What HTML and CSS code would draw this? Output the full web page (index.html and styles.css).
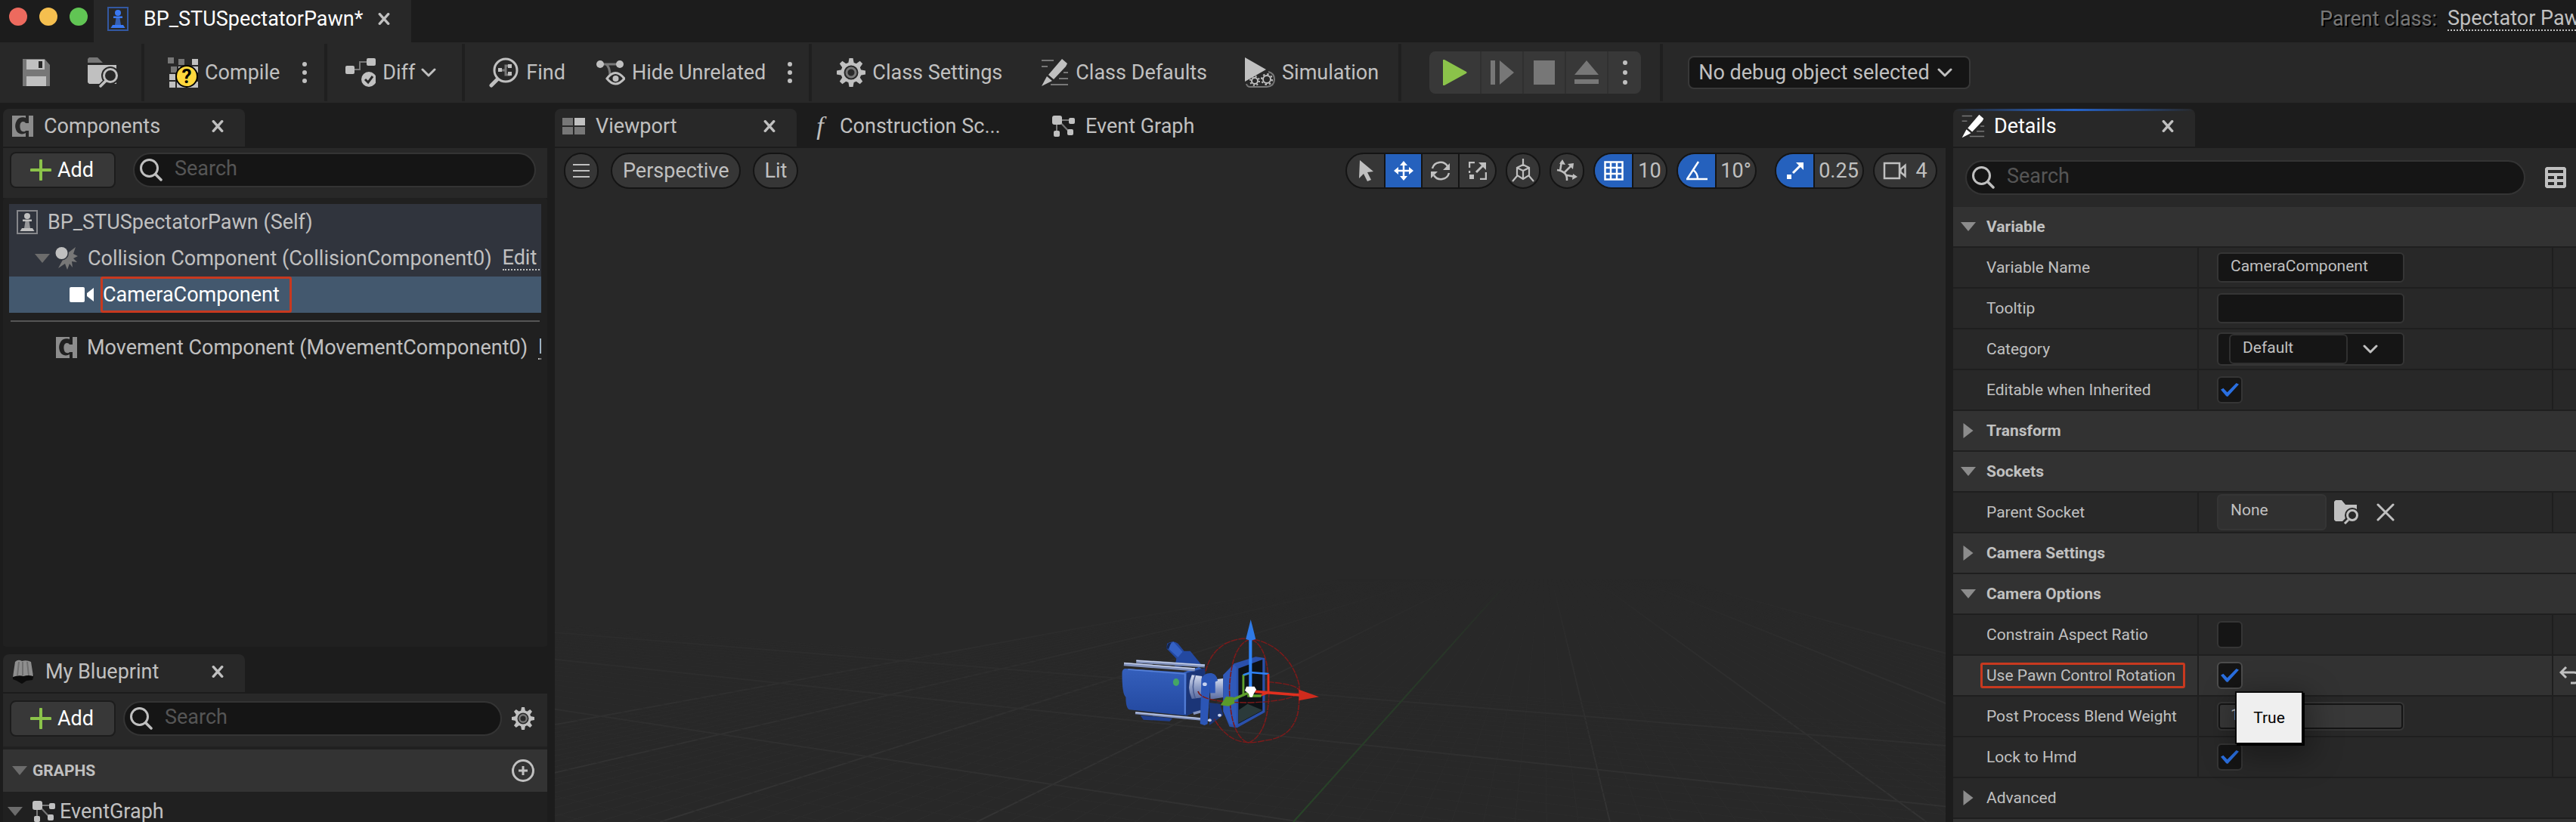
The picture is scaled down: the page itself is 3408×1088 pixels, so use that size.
FILE: index.html
```html
<!DOCTYPE html>
<html lang="en">
<head>
<meta charset="utf-8">
<title>BP_STUSpectatorPawn</title>
<link rel="stylesheet" href="styles.css">
</head>
<body>
<svg class="defs" width="0" height="0" aria-hidden="true">
  <defs>
    <symbol id="pawn" viewBox="0 0 28 32">
      <path d="M1 1h26v30H1z" fill="none" stroke="currentColor" stroke-width="2" opacity=".6"/>
      <circle cx="14" cy="8" r="4"/><path d="M8 12.500h12v2.500H8z"/>
      <path d="M11.500 15h5l1.500 9h-8z" opacity=".7"/><path d="M7 24h14l2.500 4h-19z"/>
    </symbol>
    <symbol id="close" viewBox="0 0 14 14"><path d="M2 1.500l10 11M12 1.500l-10 11" stroke="currentColor" stroke-width="3" stroke-linecap="round"/></symbol>
    <symbol id="component" viewBox="0 0 28 28">
      <path d="M0 0h18v3c-2-1-9-2-12 4-3 5-2 11 1 15 3 3 8 3 11 1v5H0z"/>
      <path d="M22 0h6v28h-6v-8h-4c-1 2-6 2-7-2-1-3-1-7 1-9 2-2 5-1 6 1h4z"/>
    </symbol>
    <symbol id="graph" viewBox="0 0 30 28">
      <path d="M6 6h18M6 6v18M8 6l16 17" stroke="#777" stroke-width="2" fill="none"/>
      <rect width="13" height="12" rx="3"/><rect x="22" y="3" width="8" height="8" rx="2"/><rect x="2" y="20" width="8" height="8" rx="2"/><rect x="20" y="18" width="8" height="8" rx="2"/>
    </symbol>
    <symbol id="lens" viewBox="0 0 30 30"><circle cx="12.500" cy="12.500" r="11" fill="none" stroke="currentColor" stroke-width="3"/><path d="M20.500 20.500l7.500 7.500" stroke="currentColor" stroke-width="3.500" stroke-linecap="round"/></symbol>
    <symbol id="plus" viewBox="0 0 28 28"><path d="M14 1.500v25M1.500 14h25" stroke="#8bc34a" stroke-width="4" stroke-linecap="round"/></symbol>
    <symbol id="gear" viewBox="0 0 38 38">
      <g id="teeth"><path d="M16.500 0h5l1.500 8h-8zM16.500 38h5l1.500-8h-8z"/><path d="M0 16.500v5l8 1.500v-8zM38 16.500v5l-8 1.500v-8z"/></g>
      <use href="#teeth" transform="rotate(45 19 19)"/>
      <circle cx="19" cy="19" r="11.500" fill="none" stroke="currentColor" stroke-width="4"/>
      <circle cx="19" cy="19" r="6" fill="none" stroke="#777" stroke-width="3"/>
    </symbol>
    <symbol id="pencil" viewBox="0 0 38 38">
      <path d="M2 3h16M2 11h8M31 19h6M25 27h12M14 35h23" stroke="#777" stroke-width="2"/>
      <path d="M29 1l7 6-2 4-16 17-7-6zM9 24l7 6-14 7z"/>
    </symbol>
    <symbol id="down" viewBox="0 0 20 12"><path d="M2 2l8 8 8-8" fill="none" stroke="currentColor" stroke-width="3" stroke-linecap="round" stroke-linejoin="round"/></symbol>
    <symbol id="dots" viewBox="0 0 6 28"><circle cx="3" cy="3" r="3"/><circle cx="3" cy="14" r="3"/><circle cx="3" cy="25" r="3"/></symbol>
    <symbol id="open" viewBox="0 0 20 12"><path d="M0 0h20l-10 12z"/></symbol>
    <symbol id="shut" viewBox="0 0 13 20"><path d="M0 0l13 10-13 10z"/></symbol>
  </defs>
</svg>

<header class="titlebar">
  <div class="lights"><i class="red"></i><i class="amber"></i><i class="green"></i></div>
  <div class="doc-tab">
    <svg class="blue" width="28" height="32"><use href="#pawn"/></svg>
    <span>BP_STUSpectatorPawn*</span>
    <button class="icon" aria-label="Close"><svg width="14" height="14"><use href="#close"/></svg></button>
  </div>
  <div class="parent"><span class="parent-label">Parent class:</span><a class="dotted" href="#">Spectator Pawn</a></div>
</header>

<nav class="toolbar">
  <div class="group files">
    <button class="tool" aria-label="Save"><svg width="36" height="36" viewBox="0 0 36 36"><path d="M0 0h29l7 8v28H0z" fill="#777"/><path d="M5 1h24v13H5zM5 23h26v13H5z"/><path d="M21 3h5v9h-5z" fill="#282828"/></svg></button>
    <button class="tool" aria-label="Browse"><svg width="40" height="40" viewBox="0 0 40 40"><path d="M0 7V2l2-2h11l7 7z" fill="#777"/><path d="M0 10h38v25H2l-2-2z"/><circle cx="30" cy="24" r="12" fill="#282828"/><path d="M24 32l-9 9" stroke="#282828" stroke-width="8"/><circle cx="30" cy="24" r="8.500" fill="#282828" stroke="currentColor" stroke-width="3"/><path d="M24 31l-7 7" stroke="currentColor" stroke-width="3.500" stroke-linecap="round"/></svg></button>
  </div>
  <div class="group compile">
    <button class="tool"><svg width="40" height="40" viewBox="0 0 40 40"><path d="M0 0h8v8H0zM14 2h8v8h-8zM4 12h8v8H4z" fill="#777"/><path d="M32 2h8v8h-8zM14 12h8v8h-8zM32 12h8v8h-8zM2 22h8v8H2zM2 32h8v8H2zM12 32h28v8H12z"/><circle cx="25" cy="25" r="14" fill="#ffd83d" stroke="#000" stroke-width="2"/><text x="25" y="34" text-anchor="middle" class="query">?</text></svg>Compile</button>
    <button class="tool" aria-label="Compile options"><svg width="6" height="28"><use href="#dots"/></svg></button>
  </div>
  <div class="group diff">
    <button class="tool"><svg width="40" height="38" viewBox="0 0 40 38"><path d="M11 15h8V5h10" fill="none" stroke="#777" stroke-width="2"/><rect y="10" width="12" height="11" rx="2"/><rect x="28" width="12" height="10" rx="2"/><circle cx="31" cy="28" r="10"/><path d="M26 28l4 4 6-8" fill="none" stroke="#282828" stroke-width="3"/></svg>Diff<svg class="tight" width="20" height="12"><use href="#down"/></svg></button>
  </div>
  <div class="group find">
    <button class="tool"><svg width="40" height="40" viewBox="0 0 40 40"><circle cx="22" cy="17" r="15" fill="none" stroke="currentColor" stroke-width="3"/><path d="M11 29l-8 8" stroke="currentColor" stroke-width="5" stroke-linecap="round"/><path d="M16 17h5M28 11h-6v12h6" fill="none" stroke="#777" stroke-width="3"/><path d="M12 14h5v5h-5zM25 9h5v5h-5zM25 19h5v5h-5z"/></svg>Find</button>
    <button class="tool"><svg width="38" height="36" viewBox="0 0 38 36"><path d="M5 7h26M13 7q5 4 5 15" fill="none" stroke="#777" stroke-width="3"/><circle cx="5" cy="7" r="5"/><circle cx="31" cy="7" r="5"/><path d="M14 26q11-15 23 0q-12 14-23 0z" fill="#282828" stroke="currentColor" stroke-width="3"/><circle cx="25.500" cy="26" r="4"/></svg>Hide Unrelated</button>
    <button class="tool" aria-label="Hide options"><svg width="6" height="28"><use href="#dots"/></svg></button>
  </div>
  <div class="group classes">
    <button class="tool"><svg width="38" height="38"><use href="#gear"/></svg>Class Settings</button>
    <button class="tool"><svg width="38" height="38"><use href="#pencil"/></svg>Class Defaults</button>
    <button class="tool"><svg width="40" height="40" viewBox="0 0 40 40"><path d="M0 0l28 16L0 32z"/><path d="M3 39q-3-3 0-6l15-8 14-7q7 1 7 9 0 12-9 12z" fill="#282828"/><path d="M2 35q1 4 5 4h22q10-1 10-10 0-8-8-10" fill="none" stroke="#777" stroke-width="2"/><g fill="none" stroke="currentColor"><circle cx="13" cy="31" r="4" stroke-width="2"/><circle cx="13" cy="31" r="6" stroke-width="2" stroke-dasharray="2 2.700"/><circle cx="29" cy="29" r="5" stroke-width="2"/><circle cx="29" cy="29" r="7" stroke-width="2" stroke-dasharray="2.500 3"/></g></svg>Simulation</button>
  </div>
  <div class="group play-wrap">
    <div class="play">
      <button class="wide" aria-label="Play"><svg width="32" height="34" viewBox="0 0 32 34"><path d="M0 1q0-2 2-1l29 16q1 1 0 2L2 34q-2 1-2-1z" fill="#8bc34a"/></svg></button>
      <button aria-label="Step"><svg width="31" height="32" viewBox="0 0 31 32"><path d="M0 0h6v32H0zM12 0l19 16-19 16z" fill="#777"/></svg></button>
      <button aria-label="Stop"><svg width="28" height="32" viewBox="0 0 28 32"><path d="M0 0h28v32H0z" fill="#777"/></svg></button>
      <button aria-label="Eject"><svg width="32" height="32" viewBox="0 0 32 32"><path d="M16 0l16 19H0zM0 25h32v6H0z" fill="#777"/></svg></button>
      <button class="last" aria-label="Play options"><svg width="6" height="34" viewBox="0 0 6 34"><circle cx="3" cy="4" r="3"/><circle cx="3" cy="17" r="3"/><circle cx="3" cy="30" r="3"/></svg></button>
    </div>
  </div>
  <div class="group debug">
    <label class="picker"><select aria-label="Debug object"><option>No debug object selected</option></select><svg width="20" height="12"><use href="#down"/></svg></label>
  </div>
</nav>

<main class="workspace">
  <div class="left">
    <section class="panel">
      <div class="tabs">
        <div class="tab active"><svg class="grey" width="28" height="28"><use href="#component"/></svg><h2>Components</h2><button class="icon" aria-label="Close"><svg width="14" height="14"><use href="#close"/></svg></button></div>
      </div>
      <div class="bar">
        <button class="add"><svg width="28" height="28"><use href="#plus"/></svg>Add</button>
        <label class="search wide-gap"><svg width="30" height="30"><use href="#lens"/></svg><input type="text" placeholder="Search" aria-label="Search components"></label>
      </div>
      <ul class="tree">
        <li class="node lit"><svg width="28" height="32"><use href="#pawn"/></svg><span class="node-name">BP_STUSpectatorPawn (Self)</span></li>
        <li class="node lit child"><svg class="arrow" width="20" height="12"><use href="#open"/></svg><svg class="burst" width="30" height="30" viewBox="0 0 30 30"><path d="M14 10L27 0l-3 9 6 3-6 3 5 5-7-1 1 8-4-5-3 8-3-8-9 6 6-11z" fill="#777"/><circle cx="8.500" cy="8" r="9.500" fill="#30343d"/><circle cx="8.500" cy="8" r="8"/></svg><span class="node-name">Collision Component (CollisionComponent0)</span><a class="dotted" href="#">Edit in C++</a></li>
        <li class="node selected grandchild"><svg width="32" height="20" viewBox="0 0 32 20"><rect width="20" height="20" rx="2"/><path d="M32 1v18l-9-7V8z"/></svg><span class="marked">CameraComponent</span></li>
        <li class="rule"></li>
        <li class="node sibling"><svg class="grey" width="28" height="28"><use href="#component"/></svg><span class="node-name">Movement Component (MovementComponent0)</span><a class="dotted" href="#">Edit in C++</a></li>
      </ul>
    </section>
    <section class="panel">
      <div class="tabs">
        <div class="tab active"><svg width="30" height="32" viewBox="0 0 30 32"><path d="M1 20h28l-2 7-8 1-6 4-7-4-5-2z" fill="#0c0c0c"/><path d="M4 3q4-4 9-1 6-2 12 1l3 19q-7-2-13 0-6-2-14 1z" fill="#8e8e8e"/><path d="M9 3l-2 18M14 3v18M20 3l2 18" stroke="#6f6f6f" stroke-width="2"/></svg><h2>My Blueprint</h2><button class="icon" aria-label="Close"><svg width="14" height="14"><use href="#close"/></svg></button></div>
      </div>
      <div class="bar lower">
        <button class="add"><svg width="28" height="28"><use href="#plus"/></svg>Add</button>
        <label class="search"><svg width="30" height="30"><use href="#lens"/></svg><input type="text" placeholder="Search" aria-label="Search blueprint"></label>
        <button class="icon" aria-label="Settings"><svg width="30" height="30"><use href="#gear"/></svg></button>
      </div>
      <div class="graphs-head"><svg class="arrow" width="20" height="12"><use href="#open"/></svg><h3>GRAPHS</h3><button class="icon" aria-label="Add graph"><svg width="30" height="30" viewBox="0 0 30 30"><circle cx="15" cy="15" r="13.500" fill="none" stroke="currentColor" stroke-width="3"/><path d="M15 9v12M9 15h12" stroke="currentColor" stroke-width="3"/></svg></button></div>
      <div class="graph-row"><svg class="arrow" width="20" height="12"><use href="#open"/></svg><svg width="30" height="28"><use href="#graph"/></svg><span>EventGraph</span></div>
    </section>
  </div>

  <section class="panel center">
    <div class="tabs">
      <div class="tab active"><svg width="30" height="22" viewBox="0 0 30 22"><path d="M0 0h14v10H0zM0 12h14v10H0zM16 12h14v10H16z" fill="#777"/><path d="M16 0h14v10H16z"/></svg><h2>Viewport</h2><button class="icon" aria-label="Close"><svg width="14" height="14"><use href="#close"/></svg></button></div>
      <div class="tab idle"><i class="fn">f</i><h2>Construction Sc...</h2></div>
      <div class="tab"><svg width="30" height="28"><use href="#graph"/></svg><h2>Event Graph</h2></div>
    </div>
    <div class="view">
      <svg class="scene" viewBox="0 0 1840 892" preserveAspectRatio="xMidYMid slice" role="img" aria-label="Camera component in the viewport">
        <defs>
          <linearGradient id="fade" x1="0" y1="200" x2="0" y2="1164" gradientUnits="userSpaceOnUse"><stop offset="0" stop-color="#000"/><stop offset=".3" stop-color="#777"/><stop offset="1" stop-color="#fff"/></linearGradient>
          <mask id="far" maskUnits="userSpaceOnUse" x="0" y="0" width="1568" height="1164"><rect width="1568" height="1164" fill="url(#fade)"/></mask>
          <linearGradient id="body" x1="0" y1="0" x2="0" y2="1"><stop offset="0" stop-color="#3560bd"/><stop offset="1" stop-color="#23489f"/></linearGradient>
          <linearGradient id="metal" x1="0" y1="0" x2="0" y2="1"><stop offset="0" stop-color="#d5dcef"/><stop offset=".5" stop-color="#8e9dc6"/><stop offset="1" stop-color="#5a6ca0"/></linearGradient>
        </defs>
        <g transform="translate(0 504) scale(1.18 .3333)" mask="url(#far)" id="grid"></g>
        <g transform="translate(706 564) scale(.4082 .3333)">
          <path d="M255 275q20-15 35 0l20 30 20 0 40 60H280l5-30-32-40z" fill="#2348a0"/>
          <path d="M255 290l20-22 30 40-15 22z" fill="#3461c4"/><path d="M252 295l6-20 10-4-8 26z" fill="#15264f"/>
          <path d="M168 560l10 18 85 6 10-12z" fill="#203f8e"/>
          <path d="M118 375l190 14 50-20 20 15-5 150-55 28-185-24q-12-5-12-50-12-10-12-95 0-15 9-18z" fill="url(#body)"/>
          <path d="M318 392l60-20-5 165-57 24z" fill="#1b3577"/>
          <path d="M128 378l185 18v160" fill="none" stroke="#5680d8" stroke-width="5"/>
          <path d="M155 346l222 18M115 357l230 22" stroke="#8191bb" stroke-width="13"/><path d="M155 343l222 18M115 353l230 22" stroke="#cbd5ee" stroke-width="4"/>
          <path d="M152 551l215 25M340 553l25-8" stroke="#8494c0" stroke-width="10"/><path d="M152 549l215 24" stroke="#cbd5ee" stroke-width="3"/>
          <ellipse cx="284" cy="429" rx="10" ry="15" fill="#44a665"/>
          <path d="M335 400l33 5v85l-33 5q-18-45 0-95z" fill="url(#metal)"/><path d="M346 402q-14 45 0 90" fill="none" stroke="#4a5c92" stroke-width="4"/>
          <path d="M395 420l42-6v75l-42 8z" fill="url(#metal)"/><path d="M393 422h18v50h-18z" fill="#2b54b5"/>
          <path d="M392 500v10l35 5 10 45-45 40z" fill="#1c3576"/><path d="M366 415q10-25 33-22 18 5 20 30l-24 12-9 160-10 5-14-6z" fill="#2c56b6"/>
          <circle cx="377" cy="437" r="7" fill="#c7d2f0"/><circle cx="393" cy="580" r="6" fill="#c7d2f0"/><circle cx="425" cy="560" r="6" fill="#c7d2f0"/>
          <path d="M437 400l35-45 70-27 30 5v215l-90 62-25-5-20-60z" fill="#2a50ab"/>
          <path d="M486 374l78-35v203l-78 52z" fill="#0d1216"/><path d="M486 540l30-25 48 25-78 52z" fill="#2b3a3a"/><path d="M437 400l35-40 8 10v230l-23-5-20-50z" fill="#3059b8"/>
          <g fill="none" stroke="#7d1a1a" stroke-width="4" stroke-dasharray="22 3">
            <path d="M380 385q15-75 65-110 75-45 155 15 65 55 83 150 3 60-5 115-20 95-105 105-80 25-125-25-25-25-40-60"/>
            <path d="M525 258q-60 20-68 190 0 190 60 222 65-30 68-200 0-190-60-212z"/>
            <path d="M580 428q100 8 105 38-20 38-160 44-160 0-170-45"/>
          </g>
          <path d="M502 484v-82l24-10" fill="none" stroke="#5ea02c" stroke-width="7"/><path d="M502 400l24-10 58 6" fill="none" stroke="#2f83f5" stroke-width="7"/><path d="M583 396v74l-25 12" fill="none" stroke="#e0301f" stroke-width="7"/>
          <path d="M525 450V250" stroke="#2f83f5" stroke-width="10"/><path d="M526 180l16 78-16 6-16-6z" fill="#2f7ae6"/>
          <path d="M540 466l145 14" stroke="#e0301f" stroke-width="11"/><path d="M682 458l65 29-65 15z" fill="#cf2b1d"/>
          <path d="M520 470l-60 32M515 483h45" stroke="#5ea02c" stroke-width="10"/><path d="M428 520l18-34 25 2 3 24-20 12z" fill="#5a9a2a"/>
          <path d="M512 446h26l6 12-8 16-5 14h-8l-4-14-12-12z" fill="#fff"/>
        </g>
      </svg>
      <div class="view-bar">
        <button class="pill round" aria-label="Viewport options"><svg width="22" height="20" viewBox="0 0 22 20"><path d="M0 2h22M0 10h22M0 18h22" stroke="currentColor" stroke-width="2"/></svg></button>
        <button class="pill label">Perspective</button>
        <button class="pill label">Lit</button>
        <div class="view-tools">
          <div class="pill seg">
            <button aria-label="Select"><svg width="20" height="28" viewBox="0 0 20 28"><path d="M2 0l18 15-8 1 5 10-5 2-5-10-6 6z"/></svg></button>
            <button class="on" aria-label="Move"><svg width="26" height="26" viewBox="0 0 26 26"><path d="M13 3v20M3 13h20" stroke="currentColor" stroke-width="2.500"/><path d="M13 0l5 6H8zM13 26l5-6H8zM0 13l6-5v10zM26 13l-6-5v10z"/></svg></button>
            <button aria-label="Rotate"><svg width="28" height="26" viewBox="0 0 28 26"><path d="M3 10A11 11 0 0 1 23 7M25 16A11 11 0 0 1 5 19" fill="none" stroke="currentColor" stroke-width="2.500"/><path d="M26 3v9h-9zM1 23v-9h9z"/></svg></button>
            <button aria-label="Scale"><svg width="24" height="24" viewBox="0 0 24 24"><path d="M1 8V1h7M1 12v3M15 23h8v-9" fill="none" stroke="currentColor" stroke-width="2.500"/><path d="M10 14L20 4" stroke="currentColor" stroke-width="3"/><path d="M13 1h10v10zM1 17h6v6H1z"/></svg></button>
          </div>
          <button class="pill round" aria-label="Coordinate space"><svg width="32" height="34" viewBox="0 0 32 34"><path d="M16 1v10M8 24l-6 7M24 24l6 7M8 13l8-4 8 4v10l-8 5-8-5zM8 13l8 4 8-4M16 17v11" fill="none" stroke="currentColor" stroke-width="2.200"/></svg></button>
          <button class="pill round" aria-label="Surface snapping"><svg width="28" height="30" viewBox="0 0 28 30"><path d="M1 14q14 2 13 14M7 3L5 15M11 17l9-9M14 21l11 2" fill="none" stroke="currentColor" stroke-width="2.500"/><path d="M8 0l4 7-8-1zM15 6l8-1-1 8zM22 19l6 4-7 4z"/></svg></button>
          <div class="pill seg"><button class="on" aria-label="Grid snap"><svg width="26" height="26" viewBox="0 0 26 26"><path d="M1.500 1.500h23v23h-23zM9 1.500v23M17 1.500v23M1.500 9h23M1.500 17h23" fill="none" stroke="currentColor" stroke-width="2.500"/></svg></button><button class="ten">10</button></div>
          <div class="pill seg"><button class="on" aria-label="Angle snap"><svg width="28" height="26" viewBox="0 0 28 26"><path d="M16 1L1 24h27M9 12q6 4 6 12" fill="none" stroke="currentColor" stroke-width="2.500"/></svg></button><button class="deg">10°</button></div>
          <div class="pill seg scale-snap"><button class="on" aria-label="Scale snap"><svg width="24" height="24" viewBox="0 0 24 24"><path d="M9 15L19 5" stroke="currentColor" stroke-width="3"/><path d="M13 1h10v10zM1 17h6v6H1z"/></svg></button><button class="quarter">0.25</button></div>
          <button class="pill speed"><svg width="32" height="24" viewBox="0 0 32 24"><path d="M2 2h20v20H2zM29.500 5v14l-6-5v-4z" fill="none" stroke="currentColor" stroke-width="2.500"/></svg>4</button>
        </div>
      </div>
    </div>
  </section>

  <section class="panel details">
    <div class="tabs">
      <div class="tab active focus"><svg width="32" height="32"><use href="#pencil"/></svg><h2>Details</h2><button class="icon" aria-label="Close"><svg width="14" height="14"><use href="#close"/></svg></button></div>
    </div>
    <div class="bar detail-bar">
      <label class="search"><svg width="30" height="30"><use href="#lens"/></svg><input type="text" placeholder="Search" aria-label="Search details"></label>
      <button class="icon" aria-label="Property matrix"><svg width="28" height="28" viewBox="0 0 28 28"><path fill-rule="evenodd" d="M2 0h24l2 2v24l-2 2H2l-2-2V2zM4 4v4h20V4zM4 12v4h8v-4zM16 12v4h8v-4zM4 20v4h8v-4zM16 20v4h8v-4z"/></svg></button>
    </div>
    <div class="props">
      <h3 class="cat"><svg class="arrow" width="20" height="12"><use href="#open"/></svg>Variable</h3>
      <div class="prop"><label for="vname">Variable Name</label><div class="value"><input class="field" id="vname" type="text" value="CameraComponent"></div><span class="reset"></span></div>
      <div class="prop"><label for="tip">Tooltip</label><div class="value"><input class="field" id="tip" type="text"></div><span class="reset"></span></div>
      <div class="prop"><label for="category">Category</label><div class="value"><div class="combo"><input id="category" type="text" value="Default"><button class="icon" aria-label="Choose category"><svg width="20" height="12"><use href="#down"/></svg></button></div></div><span class="reset"></span></div>
      <div class="prop"><label for="editable">Editable when Inherited</label><div class="value"><input class="check" id="editable" type="checkbox" checked></div><span class="reset"></span></div>
      <h3 class="cat"><svg class="arrow" width="13" height="20"><use href="#shut"/></svg>Transform</h3>
      <h3 class="cat"><svg class="arrow" width="20" height="12"><use href="#open"/></svg>Sockets</h3>
      <div class="prop"><label for="socket">Parent Socket</label><div class="value"><input class="field none" id="socket" type="text" value="None" readonly>
        <button class="icon" aria-label="Browse sockets"><svg width="32" height="32" viewBox="0 0 32 32"><path d="M0 2l2-2h8l5 6h15v22H2l-2-2z"/><circle cx="24" cy="20" r="10" fill="#282828"/><path d="M19 25l-8 8" stroke="#282828" stroke-width="7"/><circle cx="24" cy="20" r="6.500" fill="none" stroke="currentColor" stroke-width="3"/><path d="M19 26l-5 5" stroke="currentColor" stroke-width="3"/></svg></button>
        <button class="icon" aria-label="Clear socket"><svg width="24" height="24" viewBox="0 0 24 24"><path d="M2 2l20 20M22 2L2 22" stroke="currentColor" stroke-width="3" stroke-linecap="round"/></svg></button></div><span class="reset"></span></div>
      <h3 class="cat"><svg class="arrow" width="13" height="20"><use href="#shut"/></svg>Camera Settings</h3>
      <h3 class="cat"><svg class="arrow" width="20" height="12"><use href="#open"/></svg>Camera Options</h3>
      <div class="prop"><label for="aspect">Constrain Aspect Ratio</label><div class="value"><input class="check" id="aspect" type="checkbox"></div><span class="reset"></span></div>
      <div class="prop hover"><label for="rotation"><span class="marked">Use Pawn Control Rotation</span></label><div class="value"><input class="check" id="rotation" type="checkbox" checked><div class="tooltip" role="tooltip">True</div></div><span class="reset"><svg width="30" height="26" viewBox="0 0 30 26"><path d="M9 2L2 9l7 7M2 9h17q7 0 7 7t-7 7h-4" fill="none" stroke="currentColor" stroke-width="3"/></svg></span></div>
      <div class="prop"><label for="blend">Post Process Blend Weight</label><div class="value"><input class="field spin" id="blend" type="text" value="1.0"></div><span class="reset"></span></div>
      <div class="prop"><label for="hmd">Lock to Hmd</label><div class="value"><input class="check" id="hmd" type="checkbox" checked></div><span class="reset"></span></div>
      <div class="cat advanced"><svg class="arrow" width="13" height="20"><use href="#shut"/></svg>Advanced</div>
      <div class="cat"></div>
    </div>
  </section>
</main>
<script src="grid.js"></script>
</body>
</html>
```
FILE: styles.css
```css
* { box-sizing: border-box; }
body {
  margin: 0;
  height: 100vh;
  display: flex;
  flex-direction: column;
  overflow: hidden;
  background: #1c1c1c;
  color: #c0c0c0;
  font: 27px/32px Roboto, "Noto Sans", sans-serif;
  white-space: nowrap;
}
.defs { position: absolute; }
svg { fill: currentColor; flex: none; display: block; }
button, input, select { font: inherit; color: inherit; }
button { border: 0; padding: 0; background: none; display: flex; align-items: center; justify-content: center; }
h2, h3 { margin: 0; font: inherit; }
ul { margin: 0; padding: 0; list-style: none; }
a { color: inherit; text-decoration: none; }
.dotted { border-bottom: 2px dotted #c0c0c0; line-height: 30px; }

/* Title bar */
.titlebar { display: flex; flex: none; height: 56px; }
.lights { display: flex; gap: 16px; padding: 10px 8px 0 12px; }
.lights i { width: 24px; height: 24px; border-radius: 50%; }
.red { background: #ed6a5e; }
.amber { background: #f5bf4f; }
.green { background: #61c554; }
.doc-tab { display: flex; align-items: center; width: 420px; padding: 0 28px 6px 18px; background: #282828; color: #fff; }
.doc-tab span { margin-left: 20px; }
.doc-tab .icon { margin-left: auto; color: #c0c0c0; }
.blue { color: #3a78f2; }
.parent { display: flex; align-items: flex-start; width: 339px; margin-left: auto; padding-top: 9px; gap: 14px; overflow: hidden; }
.parent-label { color: #777; text-shadow: 2px 2px 0 #000; }

/* Toolbar */
.toolbar { display: flex; flex: none; height: 80px; background: #282828; }
.group { display: flex; align-items: center; gap: 50px; position: relative; height: 76px; margin-top: 2px; border-right: 4px solid #1f1f1f; }
.tool { gap: 9px; }
.tool .tight { margin-left: -1px; }
.files { padding: 0 31px 0 30px; }
.compile { gap: 30px; padding: 0 23px 0 31px; }
.diff { padding: 0 34px 0 24px; }
.find { gap: 41px; padding: 0 22px 0 32px; }
.find .tool:last-child { margin-left: -12px; }
.classes { padding: 0 26px 0 33px; }
.play-wrap { padding: 0 25px 0 37px; }
.debug { padding-left: 33px; border: 0; }
.query { font: 700 26px Roboto, sans-serif; fill: #000; }
.play { display: flex; height: 56px; border-radius: 8px; overflow: hidden; background: #383838; }
.play button { width: 56px; border-right: 2px solid #303030; }
.play .wide { width: 69px; }
.play .last { width: 43px; border: 0; }
.picker { display: grid; align-items: center; }
.picker > * { grid-area: 1 / 1; }
.picker svg { justify-self: end; margin-right: 24px; }
.picker select { appearance: none; width: 374px; height: 44px; padding: 0 12px; border: 2px solid #383838; border-radius: 8px; background: #151515; }

/* Panels */
.workspace { flex: 1; min-height: 0; display: grid; grid-template-columns: minmax(0, 720fr) minmax(0, 1840fr) minmax(0, 824fr); gap: 10px; padding: 8px 0 0 4px; }
.left { display: grid; grid-template-rows: minmax(0, 712fr) minmax(0, 222fr); gap: 10px; min-height: 0; }
.panel { display: flex; flex-direction: column; min-width: 0; min-height: 0; overflow: hidden; }
.tabs { display: flex; flex: none; height: 52px; }
.tab { display: flex; align-items: center; height: 50px; width: 320px; padding: 0 28px 4px 12px; border-radius: 8px 8px 0 0; }
.tab.active { background: #282828; }
.tab h2 { margin-left: 14px; }
.tab .icon { margin-left: auto; }
.tab .icon svg, .doc-tab .icon svg { width: 16px; height: 16px; }
.tab.focus { color: #fff; background: linear-gradient(90deg, #282828, #2563c9, #282828) 0 0 / 100% 3px no-repeat, #282828; }
.tab.focus .icon { color: #c0c0c0; }
.center .tab { padding-left: 10px; }
.details .tab { padding-left: 10px; }
.details .tab h2 { margin-left: 12px; }
.center .idle { padding-left: 20px; }
.grey { color: #8c8c8c; }
.fn { width: 22px; font: italic 34px/32px "Liberation Serif", serif; text-align: center; }
.idle h2 { margin-left: 15px; }
.center .tab:last-child { padding-left: 18px; }

.bar { display: flex; flex: none; align-items: center; height: 66px; padding: 0 15px 8px 9px; background: #282828; }
.lower { height: 70px; gap: 12px; padding: 0 17px 4px 9px; }
.add { flex: none; gap: 8px; width: 140px; height: 48px; padding-right: 2px; border: 2px solid #1c1c1c; border-radius: 8px; background: #383838; color: #fff; }
.search { display: flex; align-items: center; flex: 1; min-width: 0; height: 46px; padding-left: 7px; border: 2px solid #343434; border-radius: 23px; background: #151515; }
.wide-gap { margin-left: 23px; }
.search input { flex: 1; min-width: 0; height: 40px; margin: 0 20px 4px 16px; padding: 0; border: 0; background: none; outline: 0; }
.search input::placeholder { color: #555; opacity: 1; }
.lower .search { margin-right: 1px; margin-left: -2px; }

.tree { flex: 1; padding: 8px; background: #202020; border-radius: 4px; }
.node { display: flex; align-items: center; height: 48px; overflow: hidden; }
.node.lit { background: #30343d; padding-left: 10px; }
.node-name { margin: 0 14px 0 13px; }
.node.child { padding-left: 34px; }
.burst { margin-left: 7px; }
.node.selected { background: #43586e; color: #fff; padding-left: 80px; }
.node .marked { height: 48px; width: 253px; margin-left: 9px; line-height: 42px; }
.marked { border: 3px solid #c8391f; border-radius: 3px; }
.rule { height: 2px; margin: 10px 2px; background: #555; }
.node.sibling { padding-left: 62px; }
.arrow { color: #6c6c6c; }

.graphs-head { display: flex; flex: none; align-items: center; height: 60px; padding: 0 17px 0 12px; border-top: 4px solid #202020; background: #333; }
.graphs-head h3 { margin-left: 7px; font-size: 21px; font-weight: 700; }
.graphs-head .icon { margin-left: auto; }
.graph-row { display: flex; flex: none; align-items: center; height: 52px; padding-left: 6px; background: #202020; }
.graph-row svg + svg { margin-left: 13px; }
.graph-row span { margin-left: 6px; }

/* Viewport */
.view { position: relative; flex: 1; min-height: 0; background: #282828; }
.scene { position: absolute; inset: 0; width: 100%; height: 100%; }
.view-bar { position: relative; display: flex; gap: 16px; padding: 6px 11px 0 12px; }
.view-tools { display: flex; gap: 12px; margin-left: auto; }
.pill { height: 48px; border: 2px solid #141414; border-radius: 24px; background: #363636; overflow: hidden; }
.round { width: 46px; }
.label { padding: 0 13px 0 14px; }
.seg { display: flex; }
.seg button { width: 49px; }
.seg button + button { border-left: 2px solid #141414; }
.seg .on { background: #2561bd; color: #fff; }
.seg .ten { width: 45px; }
.seg .deg { width: 53px; }
.seg .quarter { width: 65px; }
.scale-snap { margin-left: 12px; }
.speed { gap: 11px; width: 85px; }

/* Details */
.detail-bar { height: 78px; gap: 26px; padding: 0 13px 0 16px; }
.props { font-size: 21px; line-height: 26px; }
.cat { display: flex; align-items: center; height: 54px; padding-left: 44px; border-bottom: 2px solid #1f1f1f; background: #323232; font-weight: 700; }
.cat .arrow { width: 20px; margin: 0 14px 0 -34px; color: #8c8c8c; }
.advanced { background: #282828; font-weight: 400; }
.prop { display: grid; grid-template-columns: 323px minmax(0, 1fr) 32px; height: 54px; border-bottom: 2px solid #1f1f1f; background: #282828; }
.prop > label { display: flex; align-items: center; padding-left: 44px; }
.prop > .value, .prop > .reset { display: flex; align-items: center; border-left: 2px solid #1f1f1f; min-width: 0; }
.value { position: relative; padding-left: 24px; }
.reset { padding-left: 8px; overflow: hidden; }
.field { width: 248px; height: 40px; padding: 0 16px 4px; border: 2px solid #353535; border-radius: 6px; background: #151515; }
.field.none { width: 145px; height: 48px; padding-bottom: 6px; background: #303030; }
.value .field + .icon { margin: 0 24px 0 10px; }
.field.spin { height: 38px; background: #383838; border-color: #353535; box-shadow: inset 0 0 0 2px #151515; }
.combo { display: flex; width: 248px; height: 44px; padding-left: 14px; border: 2px solid #353535; border-radius: 6px; background: #151515; }
.combo input { width: 157px; height: 40px; padding: 0 16px 4px; border: 2px solid #303030; border-radius: 6px; background: #151515; }
.combo .icon { width: 60px; }
.check { appearance: none; display: grid; place-items: center; width: 34px; height: 36px; margin: 0; border: 2px solid #353535; border-radius: 6px; background: #151515; }
.check:checked::before { content: ""; width: 24px; height: 18px; background: #2a6fe0; clip-path: polygon(0 48%, 14% 38%, 36% 68%, 86% 0, 100% 10%, 38% 100%, 30% 96%); }
.hover { background: #323232; }
.hover .check { border-color: #4c4c4c; }
.prop .marked { margin-left: -8px; padding: 1px 10px 1px 5px; }
.tooltip { position: absolute; z-index: 1; left: 50px; top: 49px; width: 86px; height: 66px; background: #efefef; color: #000; line-height: 66px; text-align: center; box-shadow: 0 0 0 2px #0a0a0a, 2px 2px 0 2px #000, 4px 10px 40px 8px rgba(0, 0, 0, .35); }
```
FILE: grid.js
```js
// Perspective floor grid: one family of lines runs to the near vanishing point,
// the other to a vanishing point far off to the left.
(function () {
  var group = document.getElementById('grid');
  function line(x1, y1, x2, y2, color, width) {
    var el = document.createElementNS('http://www.w3.org/2000/svg', 'line');
    var a = { x1: x1, y1: y1, x2: x2, y2: y2, stroke: color, 'stroke-width': width, 'vector-effect': 'non-scaling-stroke' };
    for (var k in a) el.setAttribute(k, a[k]);
    group.appendChild(el);
  }
  var i, x, cot;
  for (i = -40; i <= 40; i++) {
    x = 828 + i * 35.5;
    line(1108, 55, x, 1164, i % 10 ? '#2d2d2d' : '#343434', i % 10 ? 1 : 2);
  }
  for (i = 0; i <= 34; i++) {
    cot = 1.07 + i * 0.08;
    line(-1237, 55, 1763, 55 + 3000 / cot, i % 10 ? '#2c2c2c' : '#323232', i % 10 ? 1 : 2);
  }
  line(1108, 55, 828, 1164, '#284628', 2);
})();
```
